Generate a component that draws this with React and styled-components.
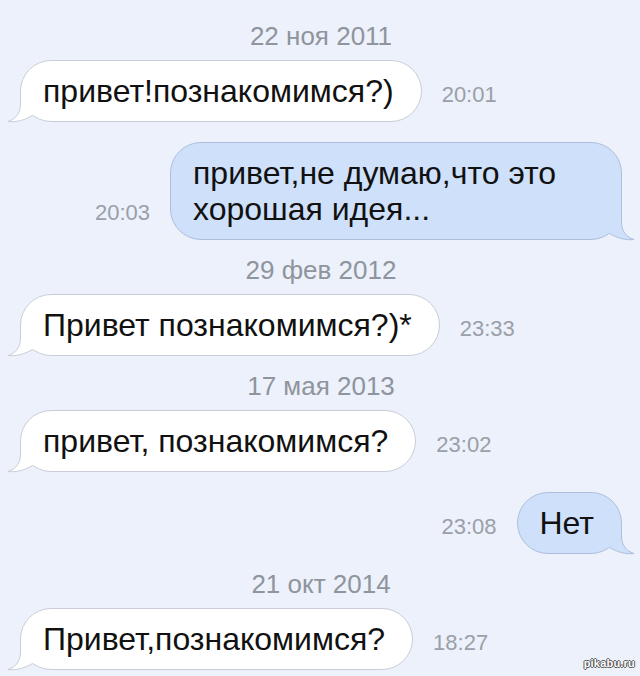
import styled, { createGlobalStyle } from 'styled-components';

const GlobalStyle = createGlobalStyle`
  html, body {
    margin: 0;
    padding: 0;
    background: #ecf1fb;
  }
  body {
    font-family: "Liberation Sans", Arial, sans-serif;
    overflow: hidden;
  }
`;

const Page = styled.div`
  position: relative;
  width: 640px;
  height: 676px;
  box-sizing: border-box;
  padding: 6px 18px 0 20px;
  display: flex;
  flex-direction: column;
  background: #ecf1fb;
  overflow: hidden;
`;

const DateLabel = styled.div`
  padding: 15px 0 9px;
  line-height: 30px;
  font-size: 26px;
  color: #8f949d;
  text-align: center;
`;

const Row = styled.div`
  display: flex;
  align-items: last baseline;
  justify-content: ${(p) => (p.$out ? 'flex-end' : 'flex-start')};
  gap: 20px;
  margin-top: ${(p) => (p.$follow ? '20px' : '0')};
`;

const Time = styled.span`
  font-size: 22px;
  color: #9a9fa8;
  white-space: nowrap;
`;

const Bubble = styled.div`
  position: relative;
  max-width: 452px;
  box-sizing: border-box;
  padding: 12px 27px 12px 22px;
  border-radius: 31px;
  border: 1px solid ${(p) => (p.$out ? '#adbfdc' : '#c9cdd6')};
  background: ${(p) => (p.$out ? '#cfe0fa' : '#ffffff')};
  font-size: 32px;
  line-height: 36px;
  color: #111;
`;

const BubbleText = styled.span`
  position: relative;
`;

const TailSvg = styled.svg`
  position: absolute;
  bottom: -1px;
  ${(p) => (p.$out ? 'right: -14px; transform: scaleX(-1);' : 'left: -14px;')}
  width: 44px;
  height: 30px;
  overflow: visible;
`;

const Watermark = styled.span`
  position: absolute;
  right: 5px;
  bottom: 7px;
  font-size: 11px;
  font-weight: bold;
  letter-spacing: 0.2px;
  color: #fff;
  text-shadow: 1px 0 0 #555, -1px 0 0 #555, 0 1px 0 #555, 0 -1px 0 #555;
`;

function Tail({ out }) {
  const fill = out ? '#cfe0fa' : '#ffffff';
  const stroke = out ? '#adbfdc' : '#c9cdd6';
  return (
    <TailSvg $out={out} viewBox="0 0 44 30">
      <path
        d="M13.5,0 L13.5,12 C13.5,21 9,27 1,29.5 C9,30.5 18,28 25.5,23.5 L34,14 L20,0 Z"
        fill={fill}
      />
      <path
        d="M13.5,0 L13.5,12 C13.5,21 9,27 1,29.5 C9,30.5 18,28 25.5,23.5"
        fill="none"
        stroke={stroke}
        strokeWidth="1"
      />
    </TailSvg>
  );
}

function Message({ out, time, follow, children }) {
  return (
    <Row $out={out} $follow={follow}>
      {out && <Time>{time}</Time>}
      <Bubble $out={out}>
        <Tail out={out} />
        <BubbleText>{children}</BubbleText>
      </Bubble>
      {!out && <Time>{time}</Time>}
    </Row>
  );
}

const thread = [
  { date: '22 ноя 2011' },
  { text: 'привет!познакомимся?)', time: '20:01' },
  { text: 'привет,не думаю,что это хорошая идея...', time: '20:03', out: true },
  { date: '29 фев 2012' },
  { text: 'Привет познакомимся?)*', time: '23:33' },
  { date: '17 мая 2013' },
  { text: 'привет, познакомимся?', time: '23:02' },
  { text: 'Нет', time: '23:08', out: true },
  { date: '21 окт 2014' },
  { text: 'Привет,познакомимся?', time: '18:27' },
];

export default function App() {
  return (
    <>
      <GlobalStyle />
      <Page>
        {thread.map((item, i) =>
          item.date ? (
            <DateLabel key={i}>{item.date}</DateLabel>
          ) : (
            <Message
              key={i}
              out={item.out}
              time={item.time}
              follow={!thread[i - 1].date}
            >
              {item.text}
            </Message>
          )
        )}
        <Watermark>pikabu.ru</Watermark>
      </Page>
    </>
  );
}
